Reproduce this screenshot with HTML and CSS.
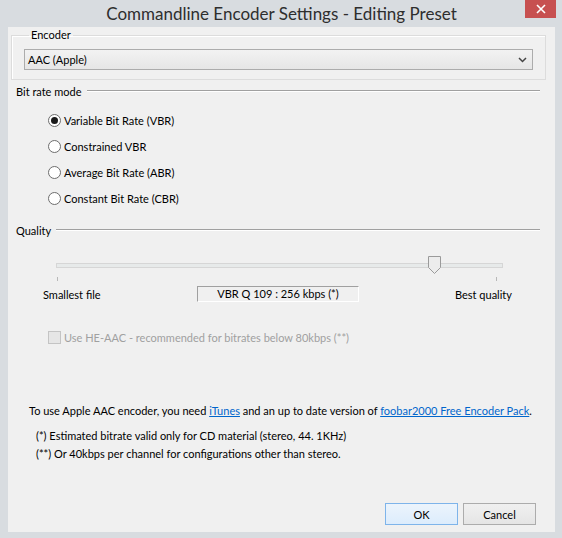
FILE: index.html
```html
<!DOCTYPE html>
<html lang="en">
  <head>
    <meta charset="UTF-8" />
    <meta name="viewport" content="width=device-width, initial-scale=1.0" />
    <title>Commandline Encoder Settings - Editing Preset</title>
    <link rel="stylesheet" href="styles.css">
  </head>
  <body>
    <div class="window">
      <div class="titlebar">
        <span class="title">Commandline Encoder Settings - Editing Preset</span>
        <span class="close">
          <svg width="10" height="10" viewBox="0 0 10 10">
            <path d="M1 1 L9 9 M9 1 L1 9" stroke="#fff" stroke-width="1.6" />
          </svg>
        </span>
      </div>

      <div class="client">
        <fieldset class="group">
          <legend>Encoder</legend>
          <div class="combo">
            <span>AAC (Apple)</span>
            <svg width="9" height="6" viewBox="0 0 9 6">
              <path d="M1 1 L4.5 4.5 L8 1" fill="none" stroke="#444" stroke-width="1.5" />
            </svg>
          </div>
        </fieldset>

        <div class="heading bitrate"><span>Bit rate mode</span><i></i></div>

        <div class="radios">
          <div class="radio checked"><span class="dot"></span>Variable Bit Rate (VBR)</div>
          <div class="radio"><span class="dot"></span>Constrained VBR</div>
          <div class="radio"><span class="dot"></span>Average Bit Rate (ABR)</div>
          <div class="radio"><span class="dot"></span>Constant Bit Rate (CBR)</div>
        </div>

        <div class="heading quality"><span>Quality</span><i></i></div>

        <div class="slider">
          <div class="track"></div>
          <svg class="thumb" width="13" height="18" viewBox="0 0 13 18">
            <path d="M0.5 0.5 H12.5 V11.5 L6.5 17.5 L0.5 11.5 Z" fill="#ececec" stroke="#9a9a9a" />
          </svg>
          <span class="tick tick-left"></span>
          <span class="tick tick-right"></span>
        </div>

        <div class="slider-labels">
          <span class="lbl-min">Smallest file</span>
          <span class="value">VBR Q 109 : 256 kbps (*)</span>
          <span class="lbl-max">Best quality</span>
        </div>

        <div class="check disabled"><span class="box"></span>Use HE-AAC - recommended for bitrates below 80kbps (**)</div>

        <p class="note">To use Apple AAC encoder, you need <a href="#">iTunes</a> and an up to date version of <a href="#">foobar2000 Free Encoder Pack</a>.</p>
        <p class="foot first">(*) Estimated bitrate valid only for CD material (stereo, 44. 1KHz)</p>
        <p class="foot">(**) Or 40kbps per channel for configurations other than stereo.</p>

        <div class="buttons">
          <button class="btn default">OK</button>
          <button class="btn">Cancel</button>
        </div>
      </div>
    </div>
  </body>
</html>
```

FILE: styles.css
```css
html,
body {
  margin: 0;
  padding: 0;
}

body {
  font-family: Lato, "Liberation Sans", sans-serif;
  font-size: 11px;
  color: #000;
  background: #d8dce0;
}

.window {
  width: 562px;
  height: 538px;
  box-sizing: border-box;
  padding: 0 7px 6px 8px;
  display: flex;
  flex-direction: column;
  background: #d8dce0;
}

.titlebar {
  height: 27px;
  flex: none;
  display: flex;
  align-items: center;
  justify-content: center;
  position: relative;
}

.title {
  font-size: 17px;
  color: #2e2e2e;
  margin-top: -1px;
}

.close {
  position: absolute;
  right: -1px;
  top: 0;
  width: 31px;
  height: 18px;
  background: #c75050;
  display: flex;
  align-items: center;
  justify-content: center;
}

.client {
  flex: 1;
  background: #f0f0f0;
  display: flex;
  flex-direction: column;
  padding: 0 15px 0 3px;
}

.group {
  margin: 1px -6px 0 0;
  padding: 8px 12px 11px 12px;
  border: 1px solid #dcdcdc;
  box-shadow: inset 1px 1px 0 #fff;
  height: 52px;
  box-sizing: border-box;
  min-width: 0;
}

.group legend {
  padding: 0 2px;
  margin-left: 5px;
  line-height: 14px;
}

.combo {
  height: 21px;
  box-sizing: border-box;
  border: 1px solid #acacac;
  background: linear-gradient(#f2f2f2, #e6e6e6);
  display: flex;
  align-items: center;
  justify-content: space-between;
  padding: 0 5px 0 3px;
  margin-top: -1px;
}

.heading {
  display: flex;
  align-items: center;
  height: 16px;
  padding-left: 5px;
}

.heading i {
  flex: 1;
  height: 1px;
  background: #a0a0a0;
  border-bottom: 1px solid #fff;
  margin-left: 5px;
}

.bitrate {
  margin-top: 3px;
}

.radios {
  display: flex;
  flex-direction: column;
  padding: 8px 0 0 37px;
}

.radio {
  display: flex;
  align-items: center;
  height: 26px;
}

.dot {
  width: 11px;
  height: 11px;
  border: 1px solid #6d6d6d;
  border-radius: 50%;
  background: #fff;
  margin-right: 3px;
  display: flex;
  align-items: center;
  justify-content: center;
}

.radio.checked .dot::after {
  content: "";
  width: 7px;
  height: 7px;
  border-radius: 50%;
  background: #1a1a1a;
}

.quality {
  margin-top: 11px;
}

.slider {
  position: relative;
  height: 30px;
  margin: 20px 0 0 45px;
  width: 447px;
}

.track {
  margin-top: 5px;
  height: 3px;
  border: 1px solid #d6d6d6;
  background: #e7eaea;
}

.thumb {
  position: absolute;
  left: 372px;
  top: -2px;
}

.tick {
  position: absolute;
  top: 19px;
  width: 1px;
  height: 4px;
  background: #b8b8b8;
}

.tick-left {
  left: 1px;
}

.tick-right {
  left: 440px;
}

.slider-labels {
  display: flex;
  align-items: center;
  height: 16px;
  margin-top: -2px;
}

.lbl-min {
  margin-left: 32px;
  width: 154px;
}

.value {
  width: 162px;
  height: 16px;
  box-sizing: border-box;
  border: 1px solid #a0a0a0;
  border-right-color: #fff;
  border-bottom-color: #fff;
  text-align: center;
  line-height: 14px;
}

.lbl-max {
  margin-left: 96px;
}

.check {
  display: flex;
  align-items: center;
  height: 16px;
  margin: 27px 0 0 37px;
}

.check.disabled {
  color: #a0a0a0;
}

.box {
  width: 11px;
  height: 11px;
  border: 1px solid #c4c4c4;
  background: #e6e6e6;
  margin-right: 3px;
}

p {
  margin: 0;
}

.note {
  margin: 58px 0 0 18px;
  line-height: 16px;
  white-space: nowrap;
}

.note a {
  color: #0066cc;
}

.foot {
  margin-left: 25px;
  line-height: 18px;
}

.foot.first {
  margin-top: 8px;
}

.buttons {
  margin-top: auto;
  margin-bottom: 7px;
  display: flex;
  justify-content: flex-end;
  gap: 5px;
  padding-right: 4px;
}

.btn {
  width: 73px;
  height: 22px;
  font-family: inherit;
  font-size: 11px;
  border: 1px solid #acacac;
  background: linear-gradient(#f0f0f0, #e5e5e5);
  color: #000;
  padding: 0;
}

.btn.default {
  border-color: #7eb4ea;
  background: linear-gradient(#ecf4fc, #dcecfc);
}
```
